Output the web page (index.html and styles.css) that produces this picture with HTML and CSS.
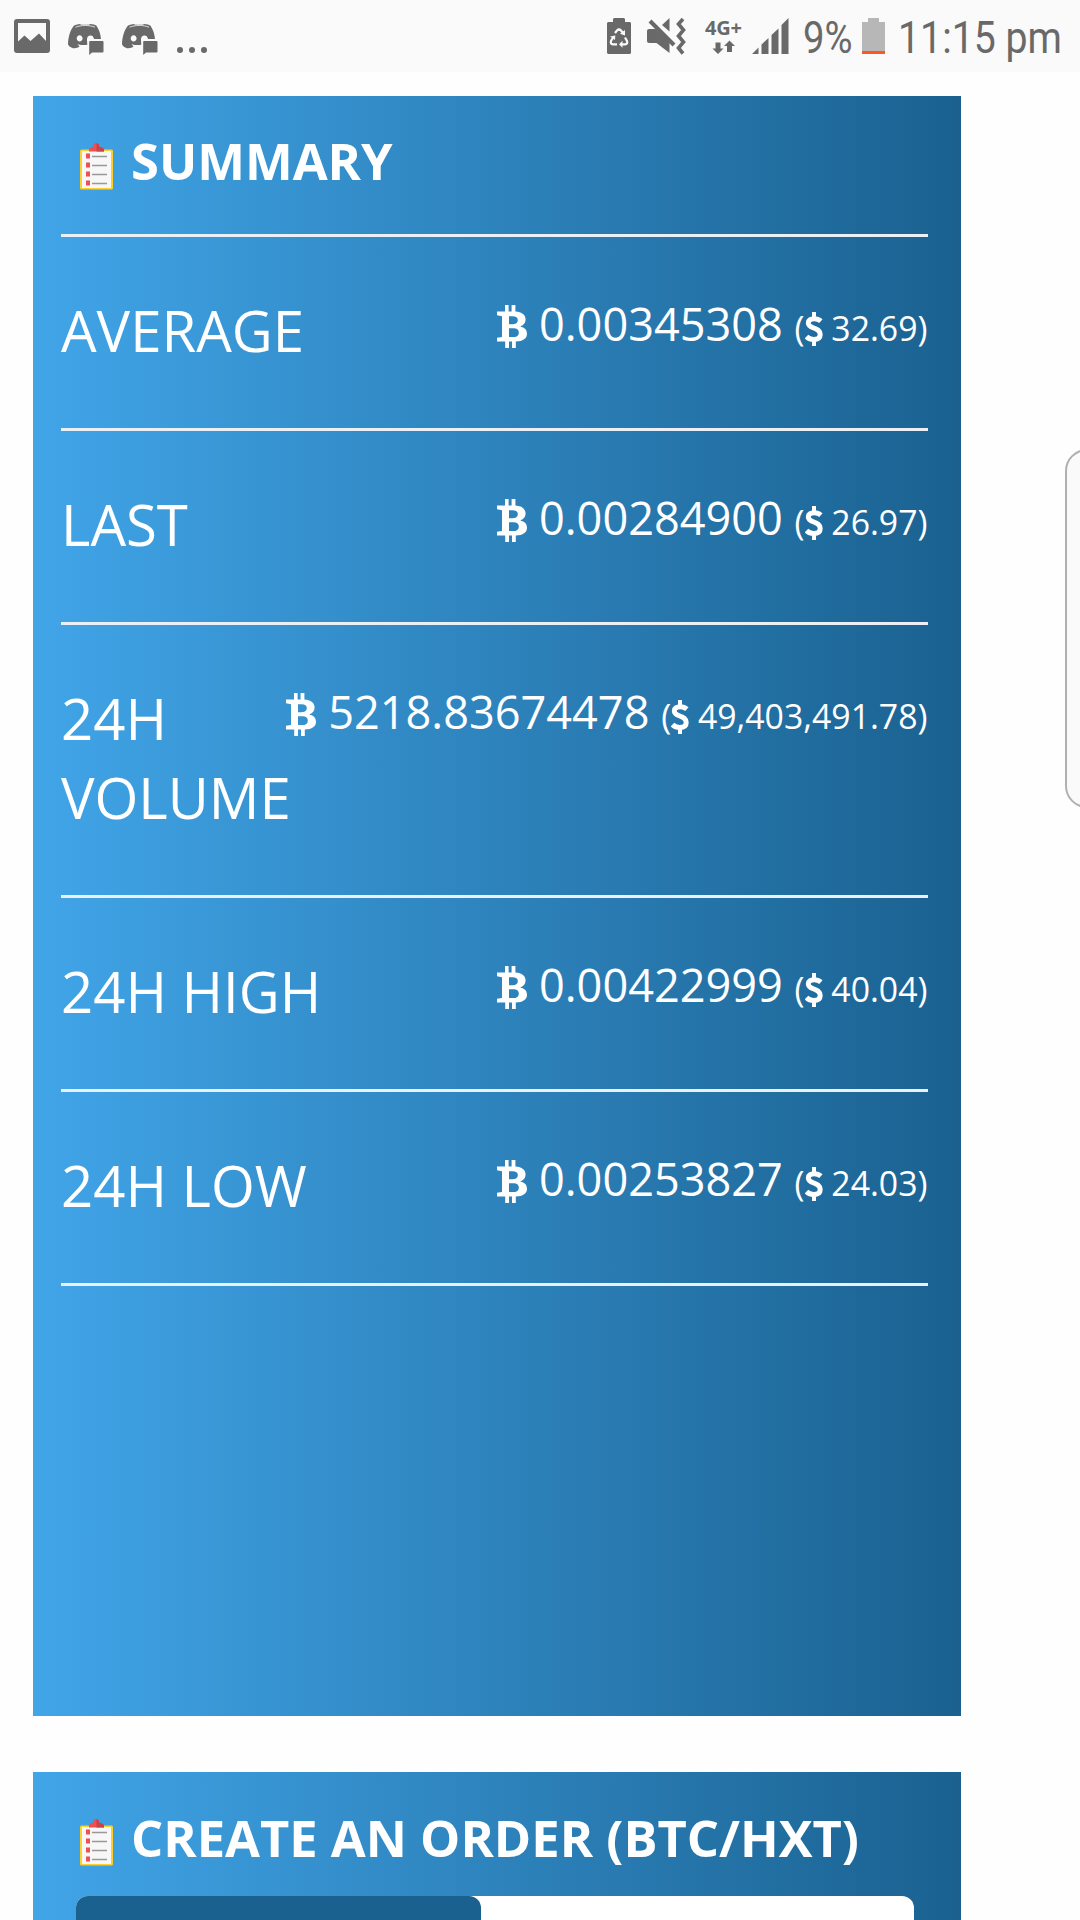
FILE: index.html
```html
<!DOCTYPE html>
<html lang="en">
<head>
<meta charset="utf-8">
<title>Market summary</title>
<link rel="stylesheet" href="styles.css">
</head>
<body>
<svg class="defs" width="0" height="0" aria-hidden="true">
  <symbol id="btc" viewBox="0 0 30 43">
    <path fill-rule="evenodd" d="M0 6.5H8V0H11.6V6.5H14.6V0H18.4V6.6C25 7 28.6 10 28.6 14.6C28.6 18 26.8 20.4 23.2 21.4C27.8 22.3 30 25 30 28.7C30 33.5 26 36.3 18.8 36.5V43H15V36.5H12V43H8.2V36.5H0V32.8L5 32V11.2L0 10.3ZM12 11.3V19.2H15.2C18.8 19.2 20.8 18 20.8 15.2C20.8 12.4 19 11.3 15.5 11.3ZM12 23.3V32.1H15.8C19.8 32.1 21.8 30.7 21.8 27.7C21.8 24.6 19.8 23.3 15.8 23.3Z"/>
  </symbol>
  <symbol id="usd" viewBox="0 0 18 34">
    <path d="M15.9 9.2C14 7.5 12 6.8 9.2 6.8C5.4 6.8 3.3 8.3 3.3 10.9C3.3 17.2 15.2 14.8 15.2 22.4C15.2 25.8 12.6 27.4 8.6 27.4C5.5 27.4 3.3 26.4 1.5 24.6" fill="none" stroke="currentColor" stroke-width="5"/>
    <path d="M7 0H11V7H7ZM7 27H11V34H7Z"/>
  </symbol>
  <symbol id="clip" viewBox="0 0 33 47">
    <rect x="0" y="6.5" width="33" height="40" rx="1.5" fill="#fdd12a"/>
    <rect x="2" y="8" width="29" height="37" fill="#f7f7f7"/>
    <path d="M9 8.5V6L11 4.5L13.5 3.5V1.5L15 0H17L19 1.5V3.5L22 4.5L24 6V8.5Z" fill="#ec4f54"/>
    <path d="M16.5 0H17L19 1.5V3.5L22 4.5L24 6V8.5H16.5Z" fill="#c94347"/>
    <path d="M6 10.5h4v5h-4zM6 19.5h4v5h-4zM6 28.500h4v5h-4zM6 37.500h4v5h-4z" fill="#ec4f54"/>
    <path d="M12 13.500h15M12 22.500h15M12 31.500h15M12 40.500h15" stroke="#999" stroke-width="1.6"/>
  </symbol>
  <symbol id="discord" viewBox="0 0 36 31">
    <path d="M6 1.500C8 .6 10 .2 12 0L13 .8H21L22 0C25 .2 27 .8 28.500 1.800C31 5.500 32.600 10 33 15H26C25.400 12.600 24.400 11.500 22.600 11.500C20 11.500 18.800 13.500 19 16L19.300 20.800C16.500 21.300 13.500 21.200 9.500 20.200L11.500 22.600C10 24 7.500 24.500 5 24.200C2.500 23.300 1 22.200 0 20.400C0 13.500 2 6.500 6 1.500ZM11.600 11.200C9.900 11.200 8.700 12.600 8.700 14.300C8.700 16.100 9.900 17.500 11.600 17.500C13.300 17.500 14.600 16.100 14.600 14.300C14.600 12.600 13.300 11.200 11.600 11.200Z" fill-rule="evenodd"/>
    <path d="M7.500 3.200C13 .9 21.500 .9 27 3.200" fill="none" stroke="#fafafa" stroke-width=".8"/>
    <path d="M22 17H34.500Q35.500 17 35.500 18V27.500Q35.500 28.500 34.500 28.500H24L21.200 31V18Q21.200 17 22 17Z"/>
  </symbol>
</svg>

<header class="status">
  <div class="status-group">
    <svg class="s-image" width="36" height="34" viewBox="0 0 36 34"><path fill-rule="evenodd" d="M3 0H33Q36 0 36 3V31Q36 34 33 34H3Q0 34 0 31V3Q0 0 3 0ZM4 4V22.500L10.500 16.500L16.500 22L25 14.500L32 22V4Z"/></svg>
    <svg class="s-discord" width="36" height="31"><use href="#discord"/></svg>
    <svg class="s-discord" width="36" height="31"><use href="#discord"/></svg>
    <svg class="s-dots" width="30" height="6" viewBox="0 0 30 6"><circle cx="3" cy="3" r="3"/><circle cx="15" cy="3" r="3"/><circle cx="27" cy="3" r="3"/></svg>
  </div>
  <div class="status-group">
    <svg class="s-saver" width="24" height="36" viewBox="0 0 24 36"><path d="M1 4H6V1L7 0H17L18 1V4H23L24 5V35L23 36H1L0 35V5Z"/><g fill="none" stroke="#fafafa" stroke-width="2.200"><path d="M8 15L10 12.500Q12 10.500 14 12.500L16 15"/><path d="M6 19.500L4 23Q3 26 6 26.300H10"/><path d="M18 19.500L20 23Q21 26 18 26.300H14"/></g><path d="M18 12V17.500L13 15.800ZM3 18.500L8.300 17.500L8 22ZM15.500 22.800V29.800L12 26.300Z" fill="#fafafa"/></svg>
    <svg class="s-mute" width="39" height="37" viewBox="0 0 39 37"><path d="M0 13Q0 11 2 11H8.500L22.500 24.500V35L9.500 25H2Q0 25 0 23ZM22.500 0V13.500L15 7Z"/><path d="M3 3L27 27" stroke="currentColor" stroke-width="4"/><path d="M36 1L31.500 6L36.500 12L31.500 18L36.500 24L31.500 30L36 35.500" fill="none" stroke="currentColor" stroke-width="3.600"/></svg>
    <svg class="s-net" width="38" height="34" viewBox="0 0 38 34"><text class="net-text" x="0" y="14.500" textLength="37">4G+</text><path d="M10.500 22.500H15.500V28.500H18.500L13 34L7.500 28.500H10.500ZM22 32V26H19L24.500 20.500L30 26H27V32Z"/></svg>
    <svg class="s-signal" width="37" height="36" viewBox="0 0 37 36"><path d="M0 36L6.500 29.500V36ZM9.500 26.500L16.500 20V36H9.500ZM19.500 17L26.500 10.500V36H19.500ZM29.500 7L36.500 0V36H29.500Z"/></svg>
    <svg class="s-percent" width="50" height="54" viewBox="0 0 50 54"><text class="clock-text" x="0" y="43.500" textLength="49.500" lengthAdjust="spacingAndGlyphs">9%</text></svg>
    <svg class="s-battery" width="23" height="36" viewBox="0 0 23 36"><path d="M0 4H6V0H17V4H23V33H0Z" fill="#b7b7b7"/><path d="M0 33H23V36H0Z" fill="#ff5722"/></svg>
    <svg class="s-clock" width="178" height="54" viewBox="0 0 178 54"><text class="clock-text" x="0" y="43.500" textLength="164" lengthAdjust="spacingAndGlyphs">11:15 pm</text></svg>
  </div>
</header>

<main class="page">
  <section class="card summary">
    <h2 class="title"><svg class="clip" width="33" height="47"><use href="#clip"/></svg>SUMMARY</h2>
    <dl class="rows">
      <div class="row"><dt>AVERAGE</dt><dd><svg class="btc"><use href="#btc"/></svg> 0.00345308 <small>(<svg class="usd"><use href="#usd"/></svg> 32.69)</small></dd></div>
      <div class="row"><dt>LAST</dt><dd><svg class="btc"><use href="#btc"/></svg> 0.00284900 <small>(<svg class="usd"><use href="#usd"/></svg> 26.97)</small></dd></div>
      <div class="row"><dt>24H VOLUME</dt><dd><svg class="btc"><use href="#btc"/></svg> 5218.83674478 <small>(<svg class="usd"><use href="#usd"/></svg> 49,403,491.78)</small></dd></div>
      <div class="row"><dt>24H HIGH</dt><dd><svg class="btc"><use href="#btc"/></svg> 0.00422999 <small>(<svg class="usd"><use href="#usd"/></svg> 40.04)</small></dd></div>
      <div class="row"><dt>24H LOW</dt><dd><svg class="btc"><use href="#btc"/></svg> 0.00253827 <small>(<svg class="usd"><use href="#usd"/></svg> 24.03)</small></dd></div>
    </dl>
  </section>
  <section class="card order">
    <h2 class="title"><svg class="clip" width="33" height="47"><use href="#clip"/></svg>CREATE AN ORDER (BTC/HXT)</h2>
    <div class="tabs"><div class="tab-active"></div></div>
  </section>
</main>
<div class="edge-handle"></div>
</body>
</html>
```
FILE: styles.css
```css
* { box-sizing: border-box; }
body {
  margin: 0;
  height: 1920px;
  position: relative;
  overflow: hidden;
  background: #fefefe;
  color: #fff;
  font-family: "Open Sans", sans-serif;
}
svg { flex: none; fill: currentColor; overflow: visible; }
.defs { position: absolute; }

.status {
  height: 72px;
  display: flex;
  justify-content: space-between;
  background: #fafafa;
  color: #696969;
}
.status-group { display: flex; align-items: flex-start; }
.s-image { margin: 19px 0 0 14px; }
.s-discord { margin: 24px 0 0 18px; }
.s-dots { margin: 47px 0 0 19px; }
.s-saver { margin: 18px 16px 0 0; }
.s-mute { margin: 18px 19px 0 0; }
.s-net { margin: 20px 9px 0 0; }
.s-signal { margin: 18px 14px 0 0; }
.s-percent { margin: 9px 9px 0 0; }
.s-battery { margin: 18px 13px 0 0; }
.s-clock { margin: 9px 4px 0 0; }
.net-text { font: bold 20px "Open Sans", sans-serif; }
.clock-text { font: 45px Roboto, sans-serif; }

.page { padding: 23.500px 0 0 33px; }
.card {
  width: 928px;
  background: linear-gradient(90deg, #41a5e8, #1a6190);
}
.summary { height: 1620px; }
.order { height: 148px; margin-top: 56.500px; }
.title {
  display: flex;
  height: 124px;
  margin: 0;
  padding: 30px 0 0 47px;
  font-size: 50.650px;
  line-height: 70px;
  font-weight: 700;
  white-space: nowrap;
}
.order .title { padding-top: 31px; }
.clip { margin: 17.500px 18px 0 0; }
.order .clip { margin-top: 16px; }
.rows {
  margin: 14px 33.500px 0 28px;
  border-top: 3px solid #eaf0f5;
}
.row {
  display: flex;
  padding: 54px 0 58px;
  border-bottom: 3px solid #eaf0f5;
}
dt {
  flex: 1 1 0;
  width: 0;
  font-size: 56.300px;
  line-height: 79px;
}
dd {
  margin: 0;
  flex: none;
  height: 64px;
  font-size: 45.100px;
  line-height: 66px;
  white-space: nowrap;
}
small { font-size: 33.800px; }
.btc { width: 30px; height: 43px; vertical-align: -7px; }
.usd { width: 18px; height: 34px; vertical-align: -5px; }

.tabs {
  width: 838px;
  height: 24px;
  margin-left: 42.500px;
  border-radius: 12px 12px 0 0;
  background: #fff;
}
.tab-active {
  width: 405px;
  height: 100%;
  border-radius: 12px 12px 0 0;
  background: #1a6190;
}
.edge-handle {
  position: absolute;
  top: 449px;
  left: 1065px;
  width: 60px;
  height: 359px;
  border: 2px solid #b0b0b0;
  border-radius: 22px;
  background: #fafafa;
}
```
